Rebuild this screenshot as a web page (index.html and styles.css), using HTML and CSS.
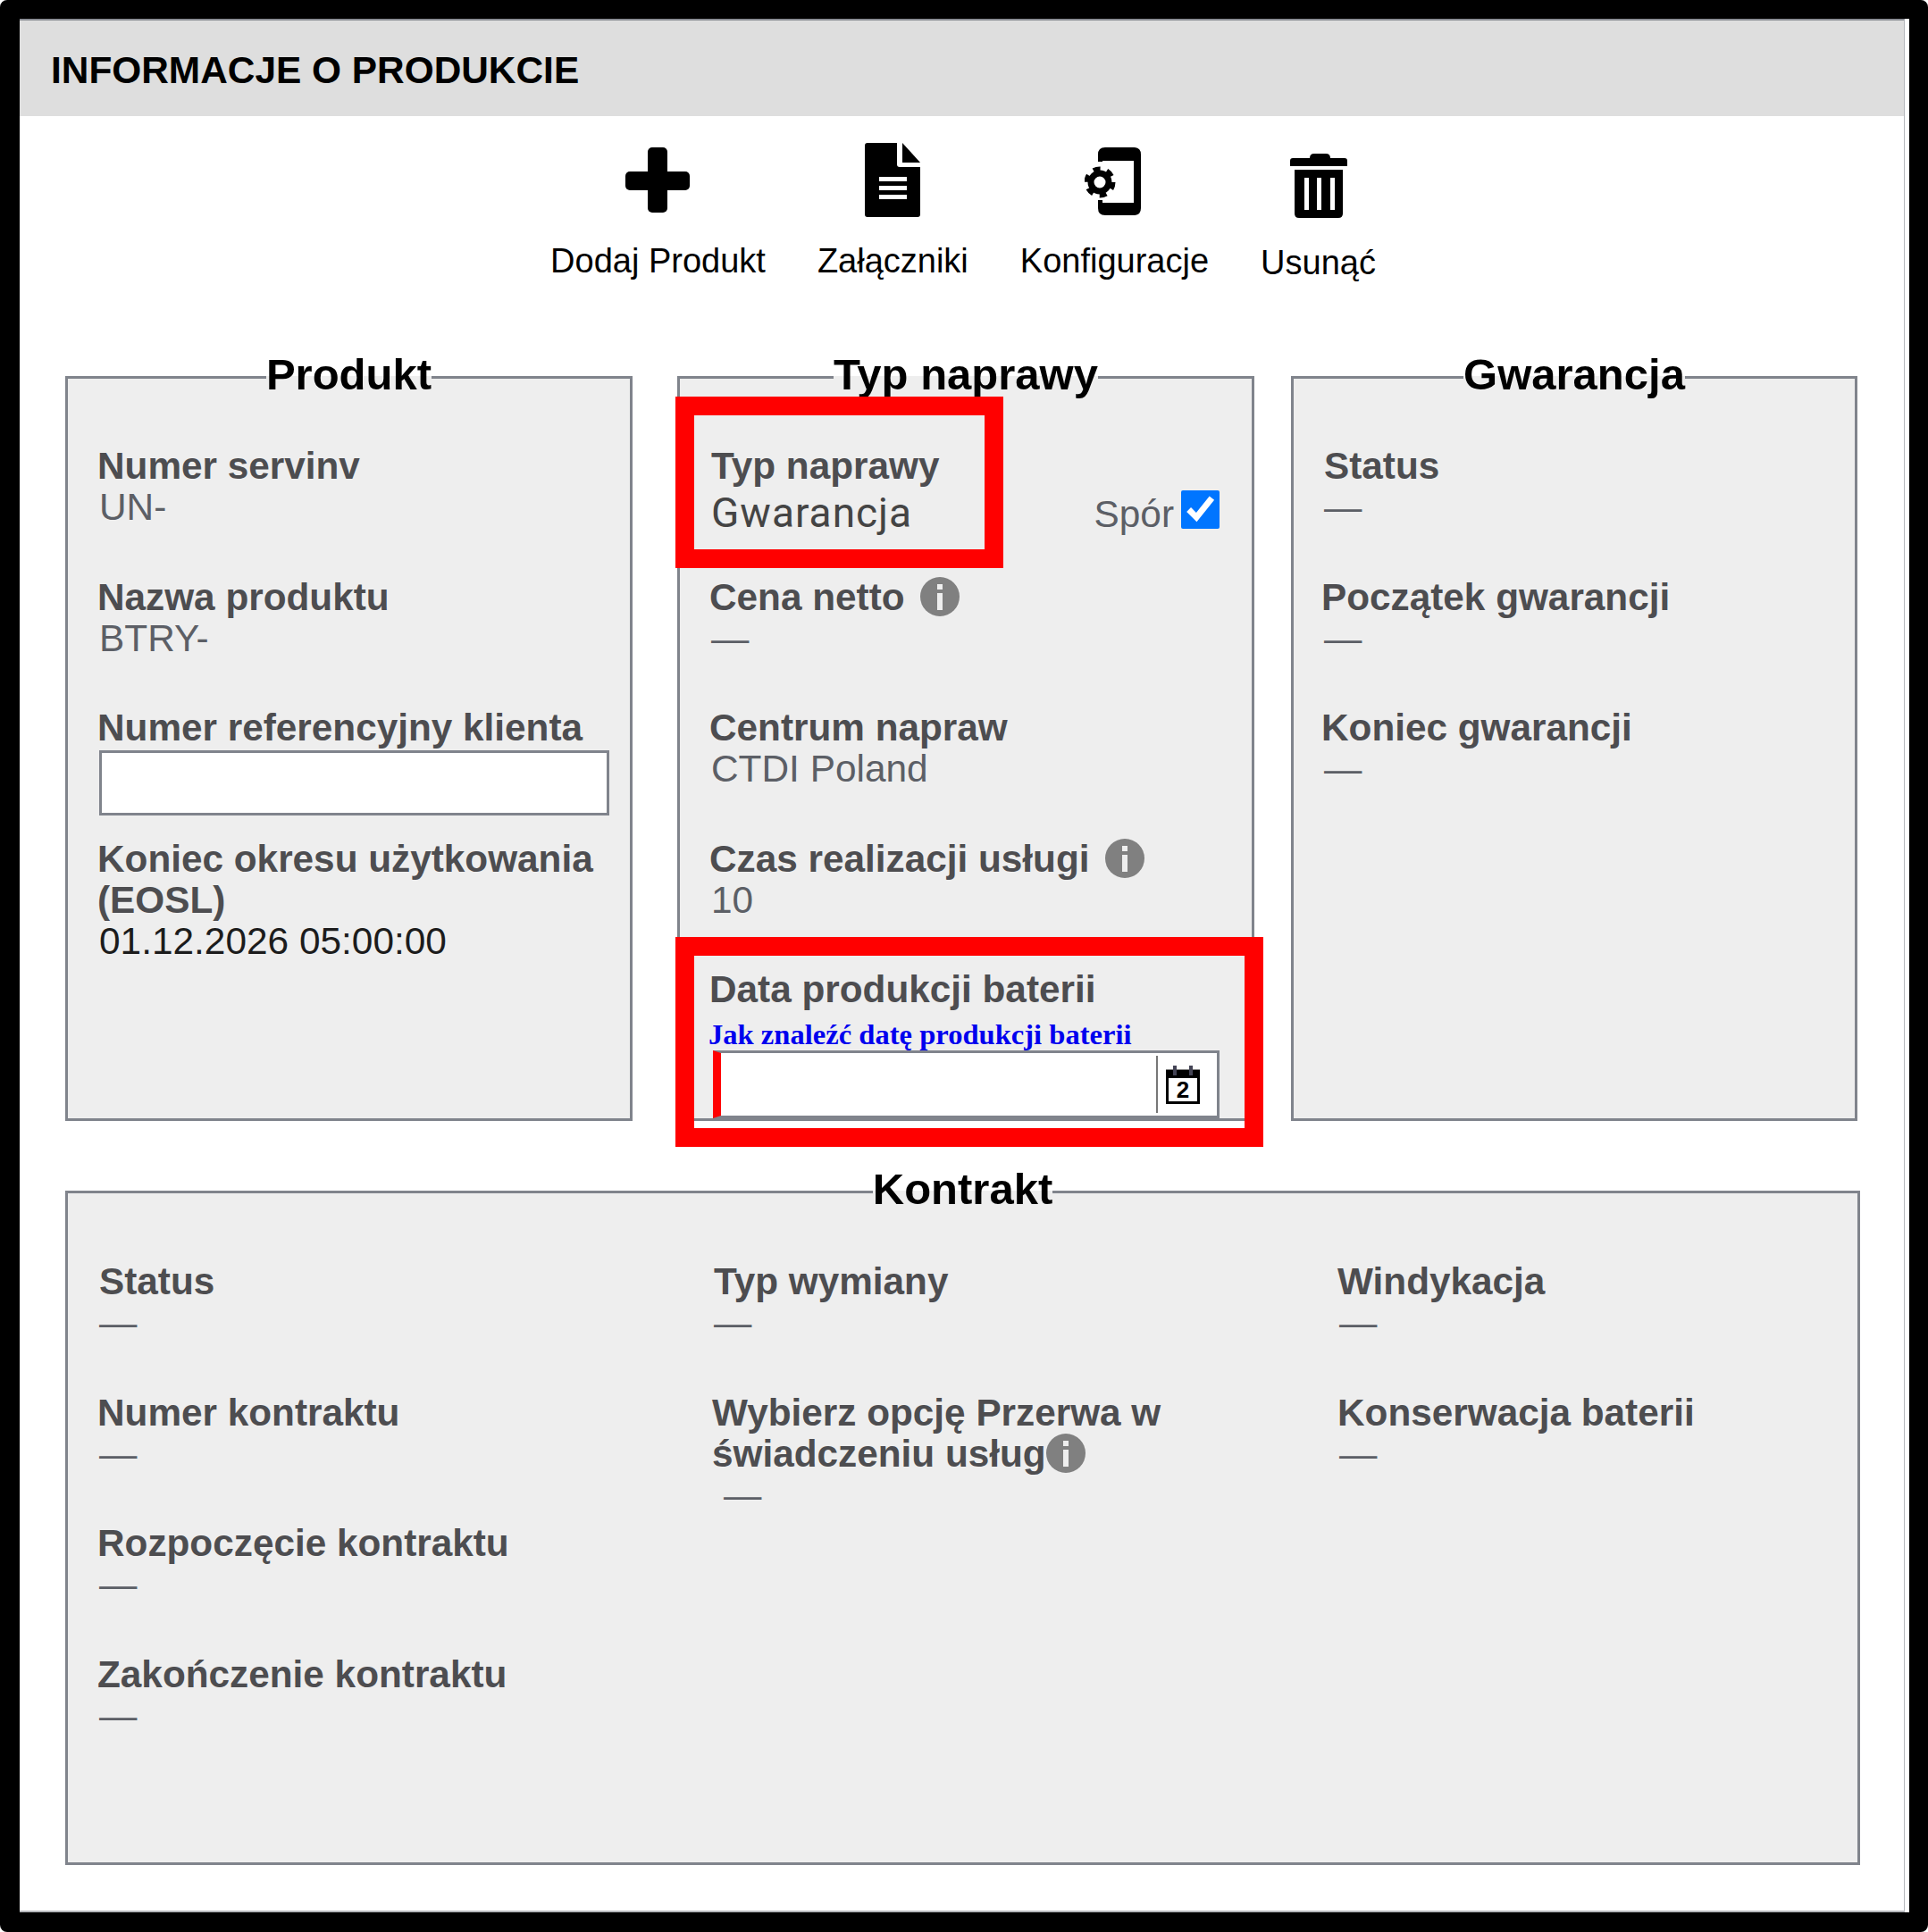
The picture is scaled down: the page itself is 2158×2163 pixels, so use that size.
FILE: index.html
```html
<!DOCTYPE html>
<html lang="pl">

<head>
  <meta charset="UTF-8" />
  <meta name="viewport" content="width=device-width, initial-scale=1.0" />
  <title>Informacje o produkcie</title>
  <link rel="stylesheet" href="styles.css">
</head>

<body>
  <div class="ramka">
    <div class="kartka">
      <h1 class="tytul">INFORMACJE O PRODUKCIE</h1>

      <nav class="akcje">
        <a class="akcja">
          <span class="ikona">
            <svg class="ikona-plus" width="72" height="73" viewBox="0 0 72 73">
              <rect x="25" y="0" width="22" height="73" rx="5" />
              <rect x="0" y="27" width="72" height="21" rx="5" />
            </svg>
          </span>
          <span class="akcja-tekst">Dodaj Produkt</span>
        </a>
        <a class="akcja">
          <span class="ikona">
            <svg width="62" height="83" viewBox="0 0 62 83">
              <path d="M3 0H36V24Q36 27 39 27H62V80Q62 83 59 83H3Q0 83 0 80V3Q0 0 3 0Z" />
              <path d="M42 0L62 22H42Z" />
              <path fill="#fff" d="M16 38H47V43H16ZM16 48H47V53H16ZM16 58H47V63H16Z" />
            </svg>
          </span>
          <span class="akcja-tekst">Załączniki</span>
        </a>
        <a class="akcja">
          <span class="ikona">
            <svg class="ikona-telefon" width="63" height="76" viewBox="0 0 63 76">
              <path d="M15 16V8Q15 0 23 0H55Q63 0 63 8V68Q63 76 55 76H23Q15 76 15 68V59H20V62H55V15H20V16Z" />
              <circle cx="17" cy="39" r="10" fill="none" stroke="#000" stroke-width="7" />
              <circle cx="17" cy="39" r="15" fill="none" stroke="#000" stroke-width="5" stroke-dasharray="8 7.7" />
            </svg>
          </span>
          <span class="akcja-tekst">Konfiguracje</span>
        </a>
        <a class="akcja">
          <span class="ikona">
            <svg class="ikona-kosz" width="64" height="72" viewBox="0 0 64 72">
              <path d="M22 5Q22 0 27 0H40Q45 0 45 5H61Q64 5 64 8V14H0V8Q0 5 3 5Z" />
              <path d="M5 18H59V67Q59 72 54 72H10Q5 72 5 67Z" />
              <path fill="#fff" d="M16 27H21V63H16ZM30 27H35V63H30ZM45 27H50V63H45Z" />
            </svg>
          </span>
          <span class="akcja-tekst akcja-tekst-nizej">Usunąć</span>
        </a>
      </nav>

      <div class="panele">
        <fieldset class="panel panel-produkt">
          <legend>Produkt</legend>
          <div class="tresc">
            <div class="pole">
              <div class="etykieta">Numer servinv</div>
              <div class="wartosc">UN-</div>
            </div>
            <div class="pole">
              <div class="etykieta">Nazwa produktu</div>
              <div class="wartosc">BTRY-</div>
            </div>
            <div class="pole">
              <div class="etykieta">Numer referencyjny klienta</div>
              <input class="pole-tekstowe" type="text" />
            </div>
            <div class="pole">
              <div class="etykieta">Koniec okresu użytkowania (EOSL)</div>
              <div class="wartosc wartosc-ciemna">01.12.2026 05:00:00</div>
            </div>
          </div>
        </fieldset>

        <fieldset class="panel panel-naprawa">
          <legend>Typ naprawy</legend>
          <div class="tresc">
            <div class="pole pole-wiersz">
              <div class="wciecie">
                <div class="etykieta">Typ naprawy</div>
                <div class="wartosc-duza">Gwarancja</div>
              </div>
              <label class="spor">Spór <input type="checkbox" checked /></label>
            </div>
            <div class="pole">
              <div class="etykieta">Cena netto
                <svg class="info" viewBox="0 0 44 44">
                  <circle cx="22" cy="22" r="22" fill="#808080" />
                  <rect x="19" y="8" width="6" height="6" fill="#eee" />
                  <rect x="19" y="18" width="6" height="19" fill="#eee" />
                </svg>
              </div>
              <div class="wartosc">—</div>
            </div>
            <div class="pole">
              <div class="etykieta">Centrum napraw</div>
              <div class="wartosc">CTDI Poland</div>
            </div>
            <div class="pole">
              <div class="etykieta">Czas realizacji usługi
                <svg class="info" viewBox="0 0 44 44">
                  <circle cx="22" cy="22" r="22" fill="#808080" />
                  <rect x="19" y="8" width="6" height="6" fill="#eee" />
                  <rect x="19" y="18" width="6" height="19" fill="#eee" />
                </svg>
              </div>
              <div class="wartosc">10</div>
            </div>
            <div class="pole">
              <div class="etykieta">Data produkcji baterii</div>
              <a class="link-bateria">Jak znaleźć datę produkcji baterii</a>
              <div class="pole-daty">
                <span class="pole-daty-przycisk">
                  <svg width="38" height="43" viewBox="0 0 38 43">
                    <rect x="1.5" y="6" width="35" height="35.5" fill="#fff" stroke="#000" stroke-width="3" />
                    <rect x="1" y="5" width="36" height="9" fill="#000" />
                    <rect x="8" y="0" width="4" height="11" fill="#445" />
                    <rect x="26" y="0" width="4" height="11" fill="#445" />
                    <text class="data-cyfra" x="19" y="36" text-anchor="middle">2</text>
                  </svg>
                </span>
              </div>
            </div>
          </div>
        </fieldset>

        <fieldset class="panel panel-gwarancja">
          <legend>Gwarancja</legend>
          <div class="tresc">
            <div class="pole">
              <div class="etykieta">Status</div>
              <div class="wartosc wartosc-lewo">—</div>
            </div>
            <div class="pole">
              <div class="etykieta etykieta-lewo">Początek gwarancji</div>
              <div class="wartosc wartosc-lewo">—</div>
            </div>
            <div class="pole">
              <div class="etykieta etykieta-lewo">Koniec gwarancji</div>
              <div class="wartosc wartosc-lewo">—</div>
            </div>
          </div>
        </fieldset>
      </div>

      <fieldset class="panel panel-kontrakt">
        <legend>Kontrakt</legend>
        <div class="kolumny">
          <div>
            <div class="pole">
              <div class="etykieta etykieta-prawo">Status</div>
              <div class="wartosc">—</div>
            </div>
            <div class="pole">
              <div class="etykieta">Numer kontraktu</div>
              <div class="wartosc">—</div>
            </div>
            <div class="pole">
              <div class="etykieta">Rozpoczęcie kontraktu</div>
              <div class="wartosc">—</div>
            </div>
            <div class="pole">
              <div class="etykieta">Zakończenie kontraktu</div>
              <div class="wartosc">—</div>
            </div>
          </div>
          <div>
            <div class="pole">
              <div class="etykieta etykieta-prawo">Typ wymiany</div>
              <div class="wartosc">—</div>
            </div>
            <div class="pole">
              <div class="etykieta">Wybierz opcję Przerwa w świadczeniu usług<svg class="info info-blisko" viewBox="0 0 44 44">
                  <circle cx="22" cy="22" r="22" fill="#808080" />
                  <rect x="19" y="8" width="6" height="6" fill="#eee" />
                  <rect x="19" y="18" width="6" height="19" fill="#eee" />
                </svg></div>
              <div class="wartosc wartosc-wcieta">—</div>
            </div>
          </div>
          <div>
            <div class="pole">
              <div class="etykieta">Windykacja</div>
              <div class="wartosc">—</div>
            </div>
            <div class="pole">
              <div class="etykieta">Konserwacja baterii</div>
              <div class="wartosc">—</div>
            </div>
          </div>
        </div>
      </fieldset>
    </div>

    <div class="znacznik znacznik-typ"></div>
    <div class="znacznik znacznik-data"></div>
  </div>
</body>

</html>
```

FILE: styles.css
```css
* {
  box-sizing: border-box;
}

body {
  margin: 0;
  font-family: "Liberation Sans", Arial, sans-serif;
}

.ramka {
  position: relative;
  width: 2158px;
  height: 2163px;
  padding: 21px 21px 22px 22px;
  background-color: white;
  overflow: hidden;
}

.ramka::before {
  content: "";
  position: absolute;
  inset: 0;
  border-style: solid;
  border-color: black;
  border-width: 21px 21px 22px 22px;
  border-radius: 8px;
  pointer-events: none;
}

.kartka {
  height: 100%;
  margin-right: 5px;
  border-top: 2px solid #8a8d94;
  border-right: 1px solid #b5b7bb;
  border-bottom: 2px solid #b5b7bb;
}

.tytul {
  margin: 0;
  height: 107px;
  padding-top: 2px;
  padding-left: 35px;
  background-color: #dedede;
  color: black;
  font-size: 42.4px;
  line-height: 107px;
}

/* akcje */

.akcje {
  display: flex;
  justify-content: center;
  gap: 58px;
  padding-top: 30px;
  padding-left: 3px;
}

.akcja {
  display: flex;
  flex-direction: column;
  align-items: center;
  color: black;
}

.ikona {
  display: flex;
  justify-content: center;
  align-items: flex-start;
  height: 84px;
}

.ikona svg {
  display: block;
}

.ikona-plus {
  margin-top: 5px;
}

.ikona-telefon {
  margin-top: 5px;
  margin-right: 4px;
}

.ikona-kosz {
  margin-top: 12px;
}

.akcja-tekst {
  margin-top: 26px;
  font-size: 38px;
  line-height: 44px;
}

.akcja-tekst-nizej {
  margin-top: 28px;
}

/* panele */

.panele {
  display: flex;
  margin-top: 75px;
  padding-left: 51px;
}

.panel {
  min-width: 0;
  margin: 0;
  padding: 0;
  border: 3px solid #80848c;
  background-color: #eee;
}

.panel legend {
  margin: 0 auto;
  padding: 0 0 6px;
  color: black;
  font-size: 49px;
  font-weight: bold;
  line-height: 56px;
}

.panel-produkt {
  width: 635px;
  height: 864px;
  margin-right: 50px;
}

.panel-naprawa {
  width: 646px;
  height: 864px;
  margin-right: 41px;
}

.panel-gwarancja {
  width: 634px;
  height: 864px;
}

.panel-kontrakt {
  width: 2009px;
  height: 785px;
  margin: 48px 0 0 51px;
}

.tresc {
  padding: 46px 0 0 33px;
}

.panel-gwarancja .tresc {
  padding-left: 34px;
}

.kolumny {
  display: grid;
  grid-template-columns: 688px 700px 1fr;
  padding: 47px 0 0 33px;
}

.pole {
  min-height: 146.5px;
}

.pole-wiersz {
  display: flex;
  justify-content: space-between;
  padding-right: 36px;
}

.etykieta {
  color: #4d4d50;
  font-size: 42.3px;
  font-weight: bold;
  line-height: 46px;
}

.etykieta-lewo {
  margin-left: -3px;
}

.etykieta-prawo {
  margin-left: 2px;
}

.wartosc {
  padding-left: 2px;
  color: #5c5f66;
  font-size: 42.4px;
  line-height: 46px;
}

.wartosc-lewo {
  padding-left: 0;
}

.wartosc-ciemna {
  color: #1c1c1c;
}

.wartosc-wcieta {
  padding-left: 13px;
}

.wciecie {
  padding-left: 2px;
}

.wartosc-duza {
  margin-top: 4px;
  color: #444;
  font-family: Roboto, "Liberation Sans", sans-serif;
  font-size: 46px;
  line-height: 50px;
  letter-spacing: 1px;
}

.spor {
  display: flex;
  align-items: flex-end;
  gap: 8px;
  height: 100px;
  color: #5c5f66;
  font-size: 42.4px;
  line-height: 46px;
}

.spor input {
  width: 43px;
  height: 43px;
  margin: 0 0 7px 0;
}

.info {
  display: inline-block;
  width: 44px;
  height: 44px;
  margin-left: 6px;
  vertical-align: -7px;
}

.info-blisko {
  margin-left: 0;
}

.pole-tekstowe {
  display: block;
  width: 571px;
  height: 73px;
  margin: 2px 0 0 2px;
  border: 3px solid #80848c;
  background-color: white;
}

.link-bateria {
  display: block;
  margin-top: 9px;
  margin-left: -1px;
  color: #0000ee;
  font-family: "Liberation Serif", "Times New Roman", serif;
  font-size: 32.6px;
  font-weight: bold;
  line-height: 36px;
}

.pole-daty {
  display: flex;
  justify-content: flex-end;
  width: 567px;
  height: 76px;
  margin-left: 4px;
  border: 3px solid #80848c;
  border-left: 9px solid red;
  background-color: white;
}

.pole-daty-przycisk {
  display: flex;
  justify-content: center;
  align-items: center;
  width: 68px;
  margin: 3px 0;
  padding-right: 10px;
  border-left: 2px solid #777;
}

.data-cyfra {
  font-family: "Liberation Sans", Arial, sans-serif;
  font-size: 26px;
  font-weight: bold;
}

/* czerwone ramki dorysowane na zrzucie */

.znacznik {
  position: absolute;
  border: 21px solid red;
}

.znacznik-typ {
  left: 756px;
  top: 444px;
  width: 367px;
  height: 192px;
}

.znacznik-data {
  left: 756px;
  top: 1049px;
  width: 658px;
  height: 235px;
}
```
